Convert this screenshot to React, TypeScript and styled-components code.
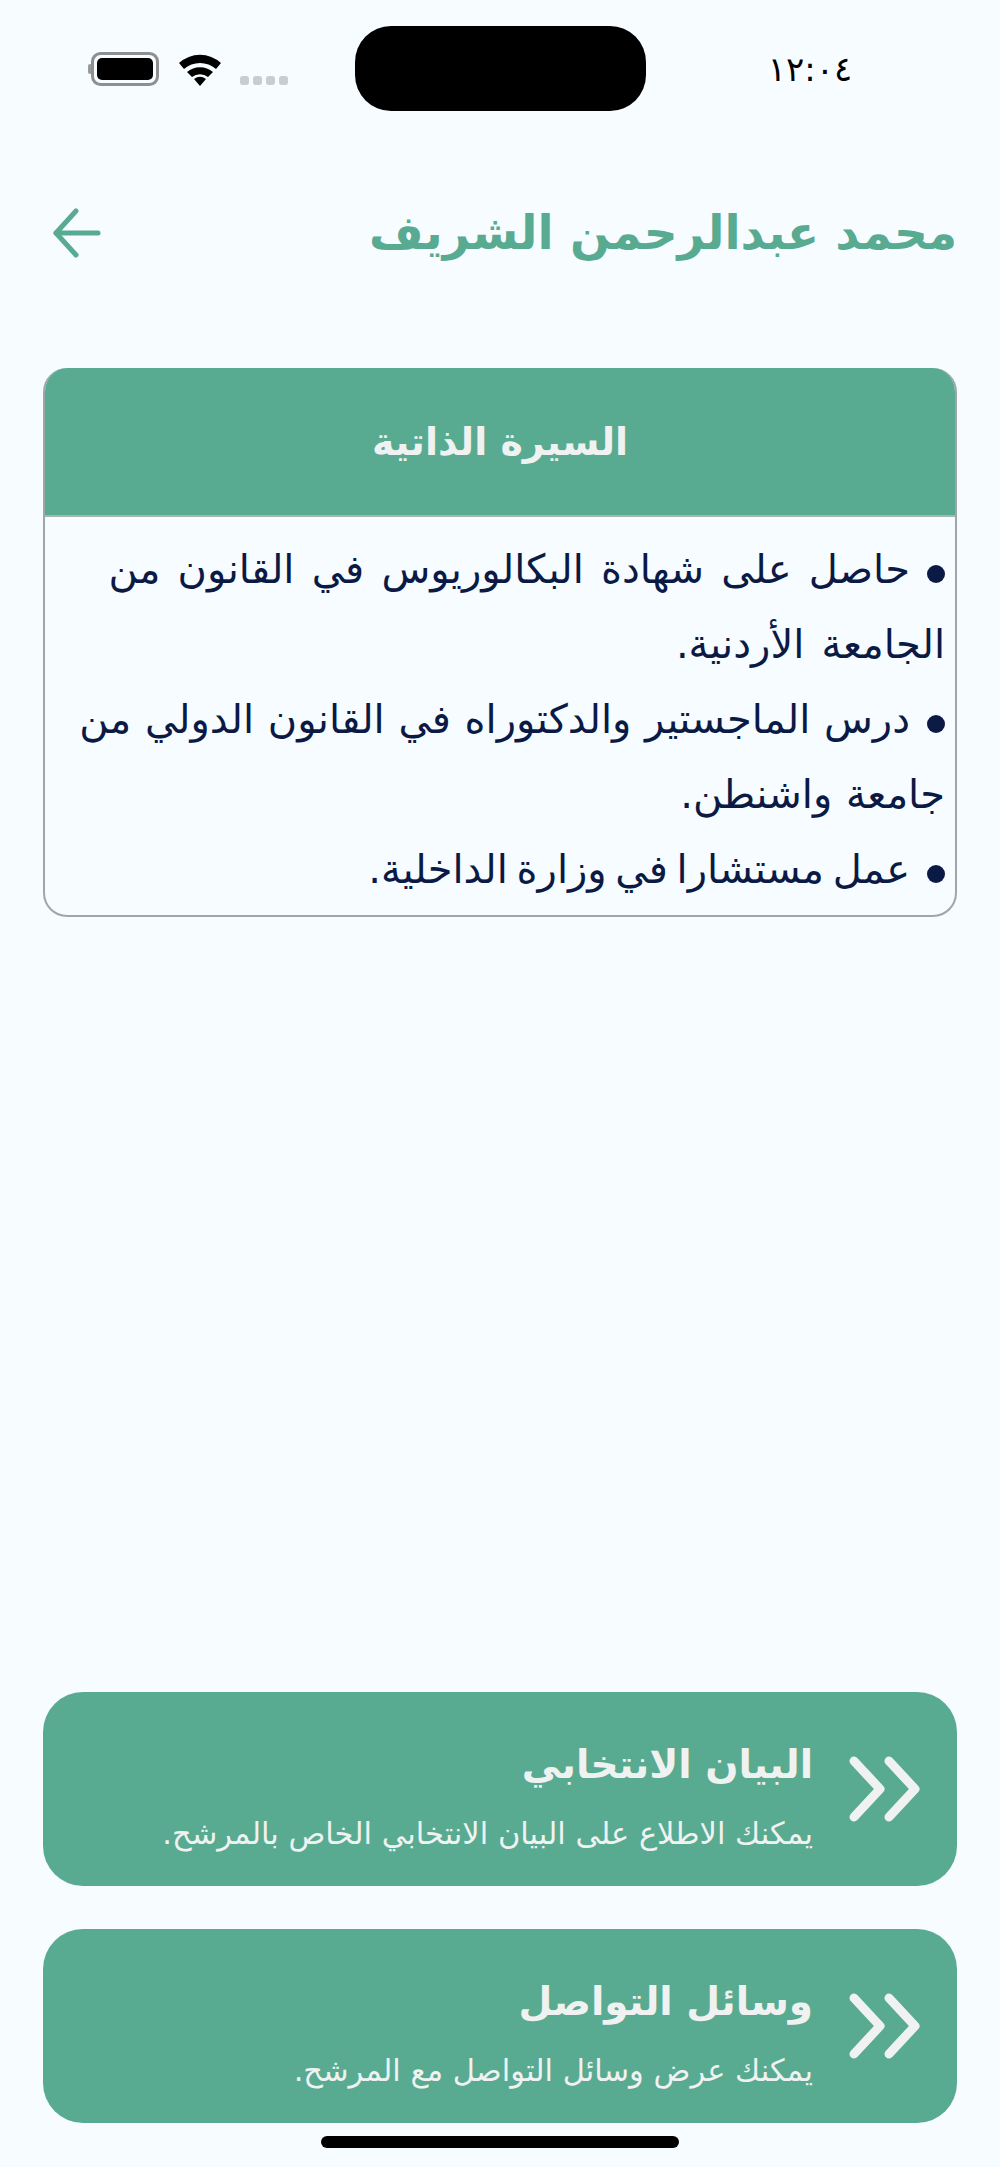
import React from 'react';
import styled, { createGlobalStyle } from 'styled-components';

const GREEN = '#58ab91';
const CREAM = '#f0f2f1';
const NAVY = '#0b1a45';

const GlobalStyle = createGlobalStyle`
  html, body {
    margin: 0;
    padding: 0;
    background: #f6fcff;
  }
  * {
    box-sizing: border-box;
  }
`;

const bio = [
  { text: 'حاصل على شهادة البكالوريوس في القانون من\nالجامعة الأردنية.', spread: 4.5 },
  { text: 'درس الماجستير والدكتوراه في القانون الدولي من\nجامعة واشنطن.', spread: 1 },
  { text: 'عمل مستشارا في وزارة الداخلية.', spread: -4 },
];

const links = [
  { title: 'البيان الانتخابي', text: 'يمكنك الاطلاع على البيان الانتخابي الخاص بالمرشح.' },
  { title: 'وسائل التواصل', text: 'يمكنك عرض وسائل التواصل مع المرشح.' },
];

const Chevrons = () => (
  <ChevronIcon viewBox="0 0 72 66" fill="none" stroke={CREAM} strokeWidth="9" strokeLinecap="round" strokeLinejoin="round">
    <path d="M5 5 L31 33 L5 61" />
    <path d="M40 5 L66 33 L40 61" />
  </ChevronIcon>
);

const App = () => {
  return (
    <Page>
      <GlobalStyle />
      <StatusBar>
        <StatusIcons>
          <svg width="72" height="34" viewBox="0 0 72 34">
            <rect x="0" y="12" width="4" height="10" rx="2" fill="#9a9a9a" />
            <rect x="4.5" y="1.5" width="65" height="31" rx="8" fill="none" stroke="#8f8f8f" strokeWidth="3" />
            <rect x="9" y="6" width="56" height="22" rx="5" fill="#000" />
          </svg>
          <svg width="44" height="34" viewBox="0 0 44 34">
            <path d="M1 11 A31 31 0 0 1 43 11 L38 17 A24 24 0 0 0 6 17 Z" fill="#000" />
            <path d="M9 20 A20 20 0 0 1 35 20 L30 25 A13 13 0 0 0 14 25 Z" fill="#000" />
            <path d="M16 27 A10 10 0 0 1 28 27 L22 34 Z" fill="#000" />
          </svg>
          <SignalDots>
            <i />
            <i />
            <i />
            <i />
          </SignalDots>
        </StatusIcons>
        <Island />
        <Clock>١٢:٠٤</Clock>
      </StatusBar>

      <Header>
        <Name>محمد عبدالرحمن الشريف</Name>
        <svg width="48" height="50" viewBox="0 0 48 50" fill="none" stroke={GREEN} strokeWidth="5" strokeLinecap="round" strokeLinejoin="round">
          <path d="M23 3 L3 25 L23 47" />
          <path d="M3 25 H45" />
        </svg>
      </Header>

      <BioCard>
        <BioTitle>السيرة الذاتية</BioTitle>
        <BioList>
          {bio.map(item => (
            <BioItem key={item.text} spread={item.spread}>
              <Dot />
              {item.text}
            </BioItem>
          ))}
        </BioList>
      </BioCard>

      <Links>
        {links.map(link => (
          <LinkCard key={link.title}>
            <Chevrons />
            <LinkText>
              <LinkTitle>{link.title}</LinkTitle>
              <LinkSub>{link.text}</LinkSub>
            </LinkText>
          </LinkCard>
        ))}
      </Links>
      <HomeBar />
    </Page>
  );
};

export default App;

const Page = styled.div`
  display: flex;
  flex-direction: column;
  height: 2167px;
  overflow: hidden;
  padding: 26px 43px 19px;
  font-family: 'DejaVu Sans', 'Noto Sans', sans-serif;
`;

const StatusBar = styled.div`
  display: flex;
  align-items: center;
  height: 85px;
  margin: 0 -43px;
  direction: ltr;
`;

const StatusIcons = styled.div`
  display: flex;
  align-items: center;
  gap: 18px;
  width: 355px;
  padding-left: 88px;
`;

const SignalDots = styled.div`
  display: flex;
  gap: 4px;
  align-self: flex-end;
  margin-bottom: 1px;

  i {
    display: block;
    width: 9px;
    height: 9px;
    border-radius: 3px;
    background: #c9ccd0;
  }
`;

const Island = styled.div`
  width: 291px;
  height: 85px;
  border-radius: 36px;
  background: #000;
`;

const Clock = styled.div`
  flex: 1;
  padding-right: 26px;
  color: #000;
  font-size: 34px;
  text-align: center;
  direction: rtl;
`;

const Header = styled.header`
  display: flex;
  align-items: center;
  justify-content: space-between;
  height: 68px;
  margin-top: 88px;
  padding-left: 10px;
  direction: rtl;
`;

const Name = styled.h1`
  margin: 0;
  color: ${GREEN};
  font-size: 47px;
  font-weight: 700;
  line-height: 68px;
`;

const BioCard = styled.section`
  margin-top: 101px;
  height: 549px;
  border: 2px solid #9fa6a8;
  border-top: 0;
  border-radius: 24px;
  overflow: hidden;
  direction: rtl;
`;

const BioTitle = styled.h2`
  display: flex;
  align-items: center;
  justify-content: center;
  height: 149px;
  margin: 0 -2px;
  border-bottom: 2px solid #a9b3b0;
  background: ${GREEN};
  color: ${CREAM};
  font-size: 38px;
  font-weight: 700;
`;

const BioList = styled.ul`
  margin: 0;
  padding: 15px 10px 0 8px;
  list-style: none;
`;

const BioItem = styled.li<{ spread: number }>`
  color: ${NAVY};
  font-size: 40px;
  line-height: 75px;
  white-space: pre-line;
  word-spacing: ${props => props.spread}px;
`;

const Dot = styled.span`
  display: inline-block;
  width: 18px;
  height: 18px;
  margin-left: 17px;
  border-radius: 50%;
  background: ${NAVY};
`;

const Links = styled.div`
  display: flex;
  flex-direction: column;
  gap: 43px;
  margin-top: auto;
`;

const LinkCard = styled.a`
  display: flex;
  align-items: center;
  gap: 36px;
  height: 194px;
  padding: 0 36px;
  border-radius: 40px;
  background: ${GREEN};
  direction: rtl;
`;

const ChevronIcon = styled.svg`
  flex: none;
  width: 72px;
  height: 66px;
`;

const LinkText = styled.div`
  display: flex;
  flex-direction: column;
  gap: 16px;
  padding-top: 10px;
  color: ${CREAM};
`;

const LinkTitle = styled.div`
  font-size: 39px;
  font-weight: 700;
  line-height: 64px;
`;

const LinkSub = styled.div`
  font-size: 30.5px;
  line-height: 42px;
`;

const HomeBar = styled.div`
  flex: none;
  width: 358px;
  height: 12px;
  margin: 13px auto 0;
  border-radius: 6px;
  background: #000;
`;
